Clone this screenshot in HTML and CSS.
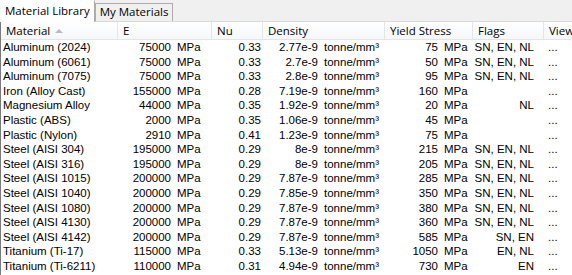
FILE: index.html
```html
<!DOCTYPE html>
<html>
<head>
<meta charset="utf-8">
<link rel="stylesheet" href="styles.css">
</head>
<body>
<div class="app">
  <div class="tabs">
    <div class="tab active">Material Library</div>
    <div class="tab">My Materials</div>
  </div>
  <div class="grid">
    <div class="hd first">Material<span class="sort"></span></div>
    <div class="hd">E</div>
    <div class="hd">Nu</div>
    <div class="hd">Density</div>
    <div class="hd">Yield Stress</div>
    <div class="hd">Flags</div>
    <div class="hd last">View</div>
  </div>
  <div class="grid rows" id="rows"></div>
</div>
<script src="app.js"></script>
</body>
</html>
```
FILE: app.js
```js
const data = [
  ["Aluminum (2024)","75000","0.33","2.77e-9","75","SN, EN, NL"],
  ["Aluminum (6061)","75000","0.33","2.7e-9","50","SN, EN, NL"],
  ["Aluminum (7075)","75000","0.33","2.8e-9","95","SN, EN, NL"],
  ["Iron (Alloy Cast)","155000","0.28","7.19e-9","160",""],
  ["Magnesium Alloy","44000","0.35","1.92e-9","20","NL"],
  ["Plastic (ABS)","2000","0.35","1.06e-9","45",""],
  ["Plastic (Nylon)","2910","0.41","1.23e-9","75",""],
  ["Steel (AISI 304)","195000","0.29","8e-9","215","SN, EN, NL"],
  ["Steel (AISI 316)","195000","0.29","8e-9","205","SN, EN, NL"],
  ["Steel (AISI 1015)","200000","0.29","7.87e-9","285","SN, EN, NL"],
  ["Steel (AISI 1040)","200000","0.29","7.85e-9","350","SN, EN, NL"],
  ["Steel (AISI 1080)","200000","0.29","7.87e-9","380","SN, EN, NL"],
  ["Steel (AISI 4130)","200000","0.29","7.87e-9","360","SN, EN, NL"],
  ["Steel (AISI 4142)","200000","0.29","7.87e-9","585","SN, EN"],
  ["Titanium (Ti-17)","115000","0.33","5.13e-9","1050","EN, NL"],
  ["Titanium (Ti-6211)","110000","0.31","4.94e-9","730","EN"]
];
const rows = document.getElementById("rows");
let html = "";
for (const r of data) {
  html += '<div class="c name">' + r[0] + '</div>' +
    '<div class="c pair"><span class="v ve">' + r[1] + '</span><span class="u">MPa</span></div>' +
    '<div class="c nu">' + r[2] + '</div>' +
    '<div class="c pair"><span class="v vd">' + r[3] + '</span><span class="u">tonne/mm³</span></div>' +
    '<div class="c pair"><span class="v ve">' + r[4] + '</span><span class="u">MPa</span></div>' +
    '<div class="c flags">' + r[5] + '</div>' +
    '<div class="c view">...</div>';
}
rows.innerHTML = html;
```
FILE: styles.css
```css
* { box-sizing: border-box; }
html, body { margin: 0; padding: 0; background: #fff; }
.app { width: 572px; height: 275px; overflow: hidden; background: #fff; }
.tabs {
  display: flex; align-items: flex-end; height: 22px;
  background: #f0f0f0; border-bottom: 1px solid #d9d9d9;
  font-family: "Open Sans", "Liberation Sans", sans-serif; font-size: 11.5px; color: #000;
}
.tab {
  height: 18px; padding: 0 4px; line-height: 16px;
  background: #f0f0f0; border: 1px solid #acacac; border-bottom: none;
}
.tab.active {
  height: 22px; background: #fff; border-color: #fff; border-right-color: #acacac;
  padding: 0 4px 0 4px; line-height: 20px; margin-bottom: -1px;
}
.grid {
  display: grid;
  grid-template-columns: 117px 94px 51px 122px 88px 71px 29px;
  border-left: 1px solid #7a7a7a;
}
.hd {
  height: 18px; line-height: 17px; padding-left: 5px;
  font-family: "Open Sans", "Liberation Sans", sans-serif; font-size: 11.5px; color: #000;
  background: linear-gradient(#ffffff, #f6f7f9);
  border-right: 1px solid #e3e5e8; border-bottom: 1px solid #e3e5e8;
  white-space: nowrap; overflow: hidden;
}
.hd.last { border-right: none; }
.sort {
  display: inline-block; width: 0; height: 0; margin-left: 5px; vertical-align: 2px;
  border-left: 4px solid transparent; border-right: 4px solid transparent;
  border-bottom: 4px solid #b8bcc2;
}
.rows { grid-auto-rows: 14.6px; height: 257px; }
.c {
  font-family: "Liberation Sans", Arial, sans-serif; font-size: 11.5px; color: #000;
  line-height: 14.6px; white-space: nowrap; overflow: hidden;
}
.name { padding-left: 2px; }
.pair { display: flex; }
.v { text-align: right; }
.ve { width: 53px; }
.vd { width: 55px; }
.u { margin-left: 6px; }
.nu { text-align: right; padding-right: 2px; }
.flags { text-align: right; padding-right: 10px; }
.view { padding-left: 4px; }
```
